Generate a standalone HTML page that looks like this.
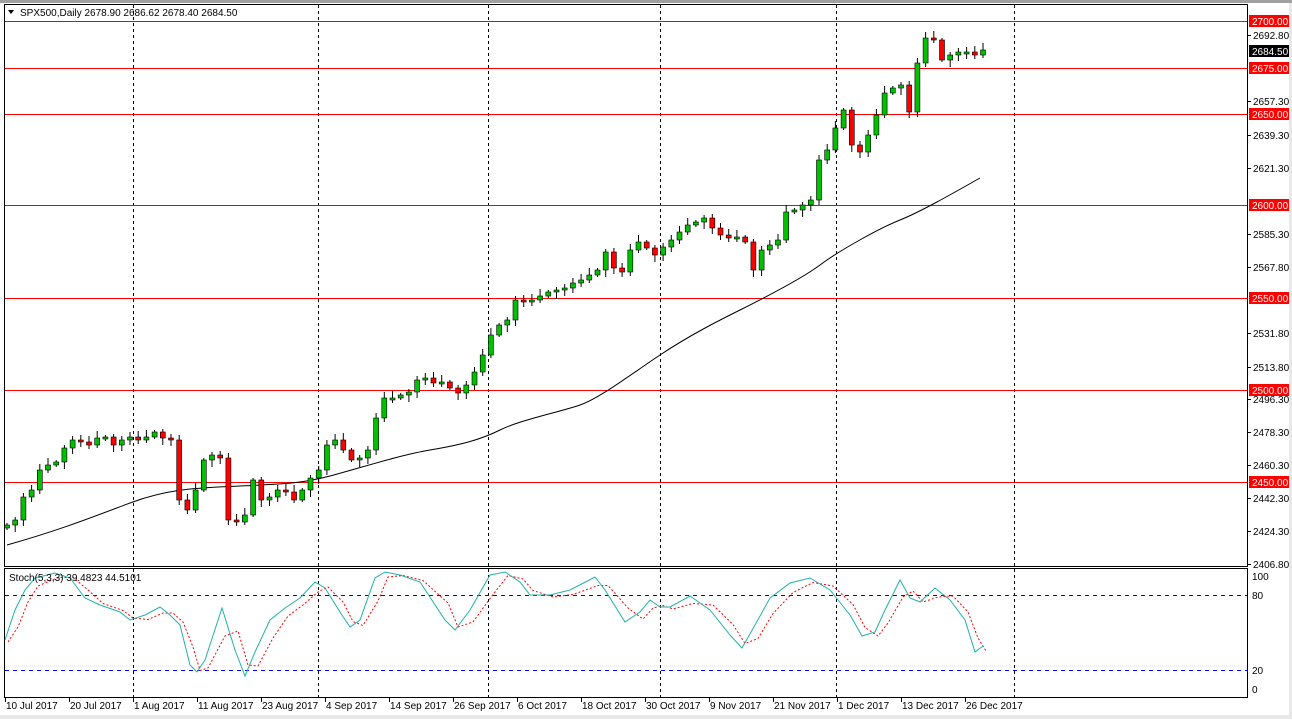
<!DOCTYPE html><html><head><style>
body{margin:0;width:1292px;height:719px;background:#fff;overflow:hidden;}
svg text{font-family:"Liberation Sans",sans-serif;font-size:10px;}
</style></head><body>
<svg id="s" width="1292" height="719" xmlns="http://www.w3.org/2000/svg">
<rect x="0" y="0" width="1292" height="719" fill="#fff"/>
<rect x="1289" y="0" width="3" height="719" fill="#e8e8e8"/>
<rect x="0" y="715" width="1292" height="4" fill="#e8e8e8"/>
<rect x="0" y="0" width="1292" height="3" fill="#a0a0a0"/>
<g id="g"></g>
</svg>
<script>
(function(){
var g=document.getElementById('g'),h='';
function L(x1,y1,x2,y2,c,d,w){h+='<line x1="'+x1+'" y1="'+y1+'" x2="'+x2+'" y2="'+y2+'" stroke="'+c+'" stroke-width="'+(w||1)+'"'+(d?' stroke-dasharray="'+d+'"':'')+'/>';}
function T(x,y,t,c,a){h+='<text x="'+x+'" y="'+y+'" fill="'+(c||'#000')+'"'+(a?' '+a:'')+'>'+t+'</text>';}
[133,318,488,660,836,1014].forEach(function(x){L(x+.5,5,x+.5,566,'#000','3,3');L(x+.5,569,x+.5,697,'#000','3,3');});
var lv=[[2700,21],[2675,68],[2650,114],[2600,205],[2550,298],[2500,390],[2450,482]];
lv.forEach(function(l){L(5,l[1]+.5,1247,l[1]+.5,'#ff0000');});
h+='<path d="M7,545 C60,530 90,518 130,503 S200,488 240,486 S300,484 330,476 S400,455 430,450 S480,440 500,430 S560,412 580,405 S630,375 660,355 S720,320 740,310 S800,280 820,265 S880,228 900,220 S950,195 980,178" fill="none" stroke="#000"/>';
var c=[525,520,497,490,470,465,462,448,440,442,445,438,437,445,440,437,440,437,432,438,440,500,510,490,460,455,458,520,522,515,480,500,497,490,492,500,490,478,470,445,440,450,460,458,450,418,398,398,395,392,380,378,383,382,388,393,385,372,355,335,325,320,300,302,300,296,292,290,288,283,280,275,270,252,268,272,250,242,248,255,247,240,232,225,222,218,228,235,238,237,242,270,250,245,240,212,210,205,200,160,150,128,110,145,152,135,115,93,88,85,112,63,38,40,60,55,52,52,55,50];
var n=c.length,sp=(983-7)/(n-1),prev=528;
for(var i=0;i<n;i++){var x=7+i*sp,o=prev,cl=c[i],tp=Math.min(o,cl),bt=Math.max(o,cl);if(bt-tp<2)bt=tp+2;
var up=cl<=o,col=up?'#00c000':'#ff0000';
var wt=tp-2-(i*7%6),wb=bt+2+(i*5%6);
L(x.toFixed(1),wt,x.toFixed(1),wb,'#000');
h+='<rect x="'+(x-2.5).toFixed(1)+'" y="'+tp+'" width="5" height="'+(bt-tp)+'" fill="'+col+'" stroke="#000" stroke-width="0.6"/>';prev=cl;}
h+='<rect x="4.5" y="4.5" width="1243" height="562" fill="none" stroke="#000"/>';
h+='<rect x="4.5" y="568.5" width="1243" height="129" fill="none" stroke="#000"/>';
var ax=[[2692.80,35],[2657.30,101],[2639.30,135],[2621.30,168],[2585.30,234],[2567.80,267],[2531.80,333],[2513.80,367],[2496.30,399],[2478.30,432],[2460.30,465],[2442.30,498],[2424.30,531],[2406.80,564]];
ax.forEach(function(a){L(1248,a[1]+.5,1251,a[1]+.5,'#000');T(1253,a[1]+4,a[0].toFixed(2));});
lv.forEach(function(l){h+='<rect x="1249" y="'+(l[1]-6)+'" width="40" height="12" fill="#ff0000"/>';T(1252,l[1]+4,l[0].toFixed(2),'#fff');});
h+='<rect x="1249" y="45" width="40" height="12" fill="#000"/>';T(1252,55,'2684.50','#fff');
[[100,576],[80,595],[20,670],[0,689]].forEach(function(a){T(1252,a[1]+4,a[0]);});
L(5,595.5,1247,595.5,'#0000ff','4,4');L(5,670.5,1247,670.5,'#0000ff','4,4');
var sp2=[[5,640],[15,610],[25,590],[35,578],[55,573],[70,578],[85,598],[100,605],[120,612],[130,620],[145,615],[160,607],[170,615],[180,625],[190,665],[197,672],[205,660],[222,608],[235,650],[245,676],[255,652],[270,620],[285,608],[300,598],[315,582],[325,588],[340,612],[350,627],[360,620],[375,578],[385,572],[400,575],[420,582],[445,620],[455,630],[470,610],[490,575],[505,572],[520,582],[530,595],[550,595],[570,590],[595,577],[605,590],[625,622],[640,612],[650,600],[660,607],[670,607],[690,596],[710,610],[730,635],[742,648],[755,625],[770,598],[790,583],[810,578],[830,590],[850,615],[862,636],[875,632],[885,610],[900,580],[910,598],[920,602],[935,588],[950,600],[965,620],[975,652],[983,646]];
var p1=sp2.map(function(p){return p.join(',');}).join(' ');
var p2=sp2.map(function(p,i){var q=sp2[Math.max(0,i-1)];return (p[0]+3)+','+((p[1]+q[1])/2+2);}).join(' ');
h+='<polyline points="'+p2+'" fill="none" stroke="#ff0000" stroke-dasharray="2,2"/>';
h+='<polyline points="'+p1+'" fill="none" stroke="#20b2aa"/>';
T(9,581,'Stoch(5,3,3) 39.4823 44.5101');
h+='<path d="M8,10 L14,10 L11,14 Z" fill="#000"/>';
T(20,16,'SPX500,Daily  2678.90 2686.62 2678.40 2684.50');
var d=[[5,'10 Jul 2017'],[69,'20 Jul 2017'],[133,'1 Aug 2017'],[197,'11 Aug 2017'],[261,'23 Aug 2017'],[325,'4 Sep 2017'],[389,'14 Sep 2017'],[453,'26 Sep 2017'],[517,'6 Oct 2017'],[581,'18 Oct 2017'],[645,'30 Oct 2017'],[709,'9 Nov 2017'],[773,'21 Nov 2017'],[837,'1 Dec 2017'],[901,'13 Dec 2017'],[965,'26 Dec 2017']];
d.forEach(function(a){L(a[0]+.5,698,a[0]+.5,702,'#000');T(a[0]+1,709,a[1]);});
g.innerHTML=h;
})();
</script>
</body></html>
